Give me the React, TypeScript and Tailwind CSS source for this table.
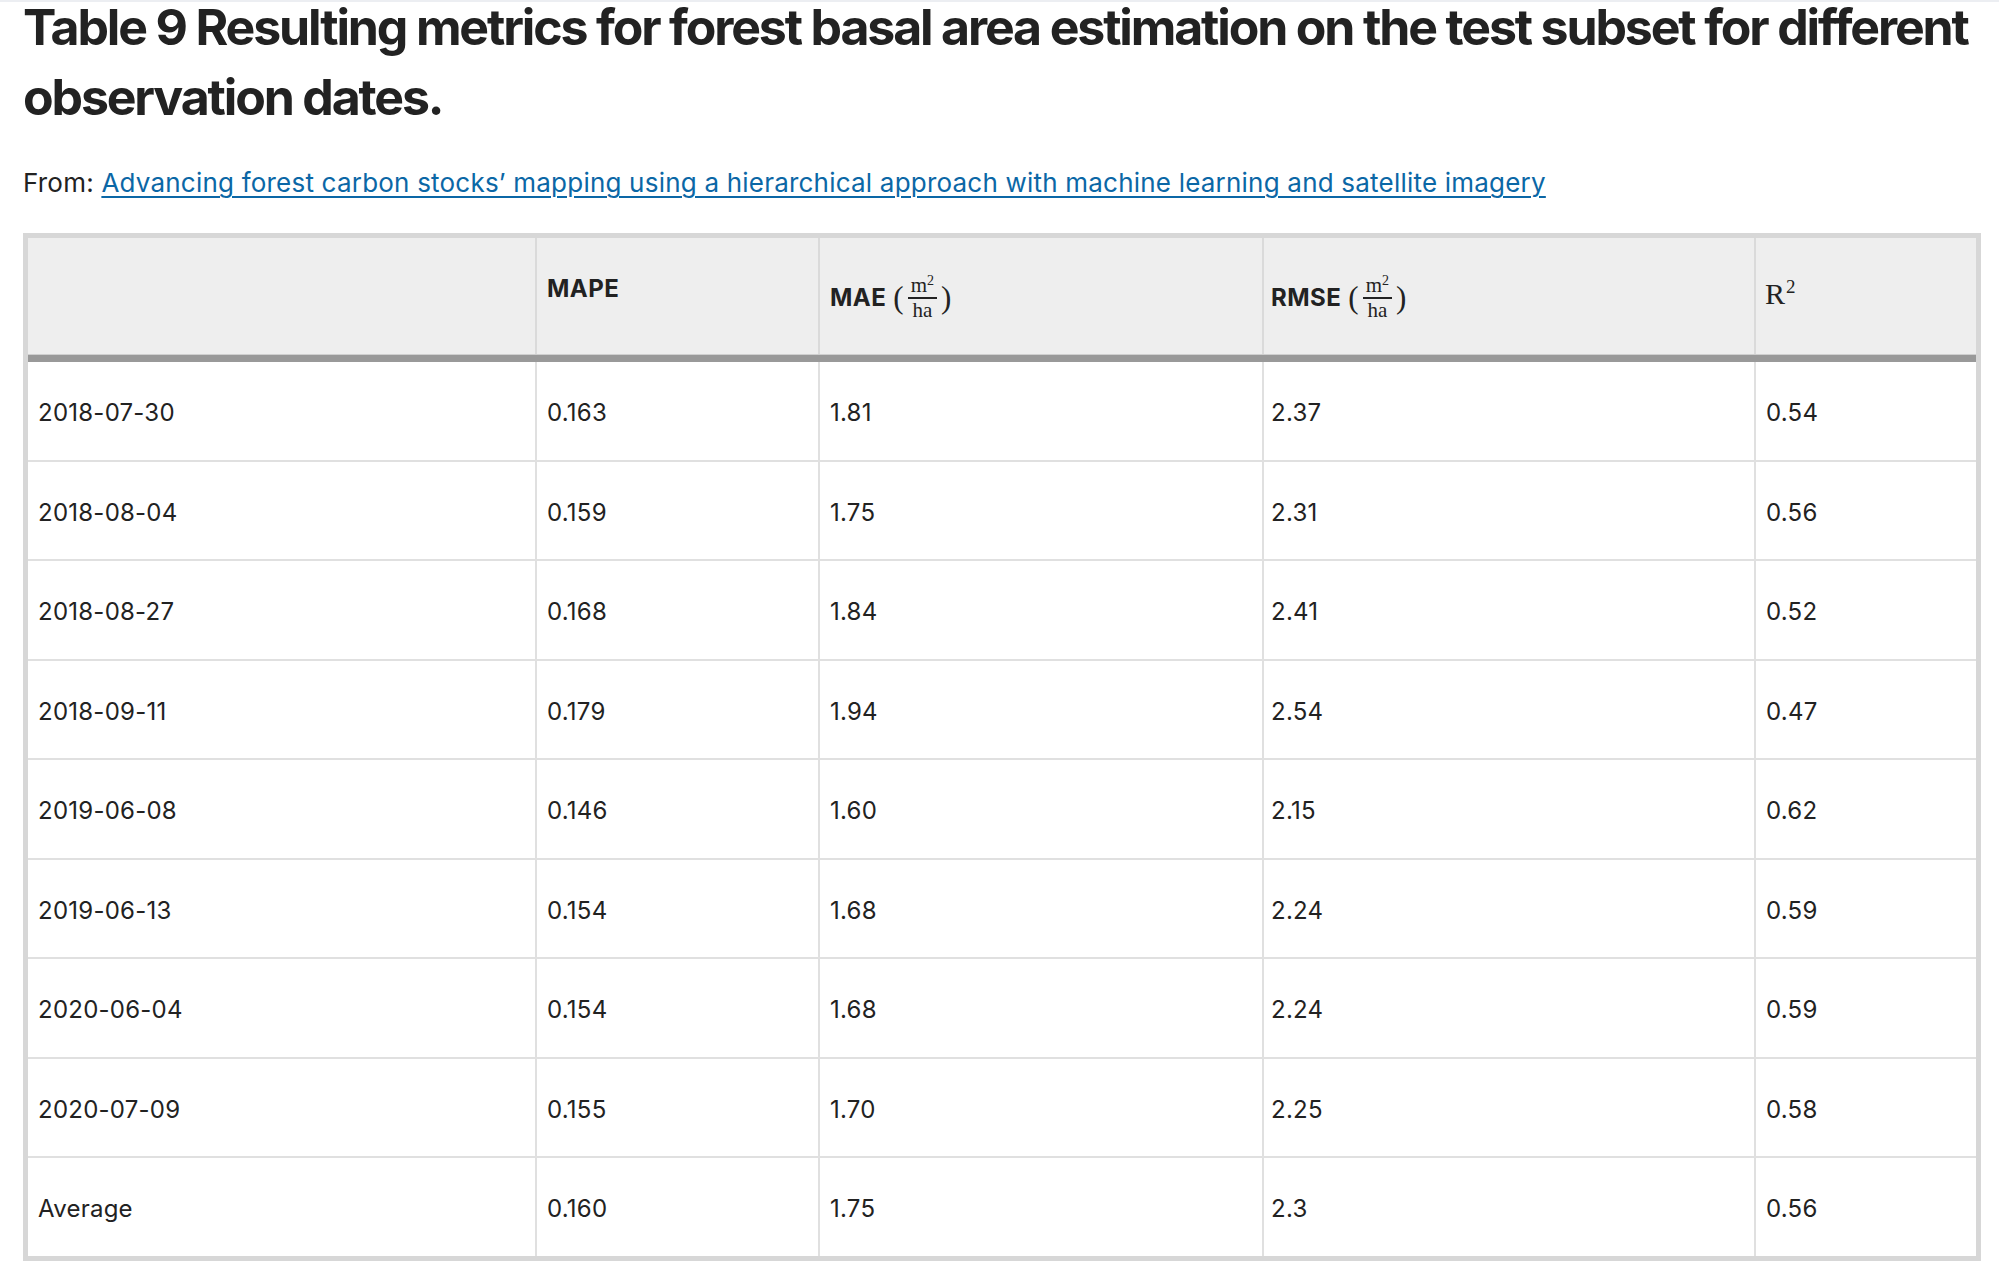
import React from 'react';

const rows: string[][] = [
  ['2018-07-30', '0.163', '1.81', '2.37', '0.54'],
  ['2018-08-04', '0.159', '1.75', '2.31', '0.56'],
  ['2018-08-27', '0.168', '1.84', '2.41', '0.52'],
  ['2018-09-11', '0.179', '1.94', '2.54', '0.47'],
  ['2019-06-08', '0.146', '1.60', '2.15', '0.62'],
  ['2019-06-13', '0.154', '1.68', '2.24', '0.59'],
  ['2020-06-04', '0.154', '1.68', '2.24', '0.59'],
  ['2020-07-09', '0.155', '1.70', '2.25', '0.58'],
  ['Average', '0.160', '1.75', '2.3', '0.56'],
];

// m²/ha written as a small stacked fraction in parentheses
function Unit() {
  return (
    <span className="ml-[7px] inline-flex items-center font-['Liberation_Serif',serif] font-normal tracking-normal text-[#222]">
      <span className="text-[31px] leading-[32px]">(</span>
      <span className="mx-[4px] inline-flex flex-col items-center">
        <span className="px-[3px] text-[21px] leading-[19px]">
          m<span className="relative top-[-7px] text-[14px]">2</span>
        </span>
        <span className="h-[1.5px] w-full bg-[#222]" />
        <span className="px-[3px] pt-[1px] text-[21px] leading-[20px]">ha</span>
      </span>
      <span className="text-[31px] leading-[32px]">)</span>
    </span>
  );
}

export default function App() {
  return (
    <div className="min-h-screen bg-white font-[Inter,sans-serif] text-[#222]">
      <div className="h-[2px] bg-[#eceef2]" />
      <div className="w-[1981px] pl-[23px]">
        <h1 className="mt-[-10px] w-[1970px] text-[50px] font-bold leading-[70px] tracking-[-0.043em]">
          Table 9 Resulting metrics for forest basal area estimation on the test subset for different
          <br />
          observation dates.
        </h1>

        <p className="mt-[34px] text-[26px] leading-[34px] tracking-[0.008em]">
          From:{' '}
          <a href="#" className="text-[#0b67a6] underline decoration-[1.5px] underline-offset-[4px]">
            Advancing forest carbon stocks’ mapping using a hierarchical approach with machine learning and satellite imagery
          </a>
        </p>

        <div className="mt-[33px] w-[1958px] border-[5px] border-[#d7d7d7]">
          <div className="grid grid-cols-[507px_283px_444px_492px_222px]">
            <div className="h-[116px] bg-[#eeeeee]" />
            <div className="h-[116px] border-l-2 border-[#dadada] bg-[#eeeeee] pl-[10px] pt-[37px] text-[24px] font-bold leading-[28px] tracking-[0.02em]">
              MAPE
            </div>
            <div className="h-[116px] border-l-2 border-[#dadada] bg-[#eeeeee] pl-[10px] pt-[38px]">
              <div className="flex items-center text-[24px] font-bold leading-[28px] tracking-[0.02em]">
                MAE
                <Unit />
              </div>
            </div>
            <div className="h-[116px] border-l-2 border-[#dadada] bg-[#eeeeee] pl-[7px] pt-[38px]">
              <div className="flex items-center text-[24px] font-bold leading-[28px] tracking-[0.02em]">
                RMSE
                <Unit />
              </div>
            </div>
            <div className="h-[116px] border-l-2 border-[#dadada] bg-[#eeeeee] pl-[9px] pt-[40px] font-['Liberation_Serif',serif] text-[30px] leading-[32px]">
              R<span className="relative top-[-11px] ml-[1px] text-[19px]">2</span>
            </div>

            <div className="col-span-5 h-[8px] border-t border-[#cfcfcf] bg-[#999999]" />

            {rows.map((row, ri) =>
              row.map((cell, ci) => (
                <div
                  key={ri + '-' + ci}
                  className={
                    (ri === 0 ? 'h-[97.5px] ' : 'h-[99.5px] border-t-2 ') +
                    (ci === 0 ? 'pl-[10px] ' : ci === 3 ? 'border-l-2 pl-[7px] ' : 'border-l-2 pl-[10px] ') +
                    'flex items-center border-[#e0e0e0] pt-[5px] text-[24px] leading-[28px] tracking-[0.01em]'
                  }
                >
                  {cell}
                </div>
              )),
            )}
          </div>
        </div>
      </div>
    </div>
  );
}
